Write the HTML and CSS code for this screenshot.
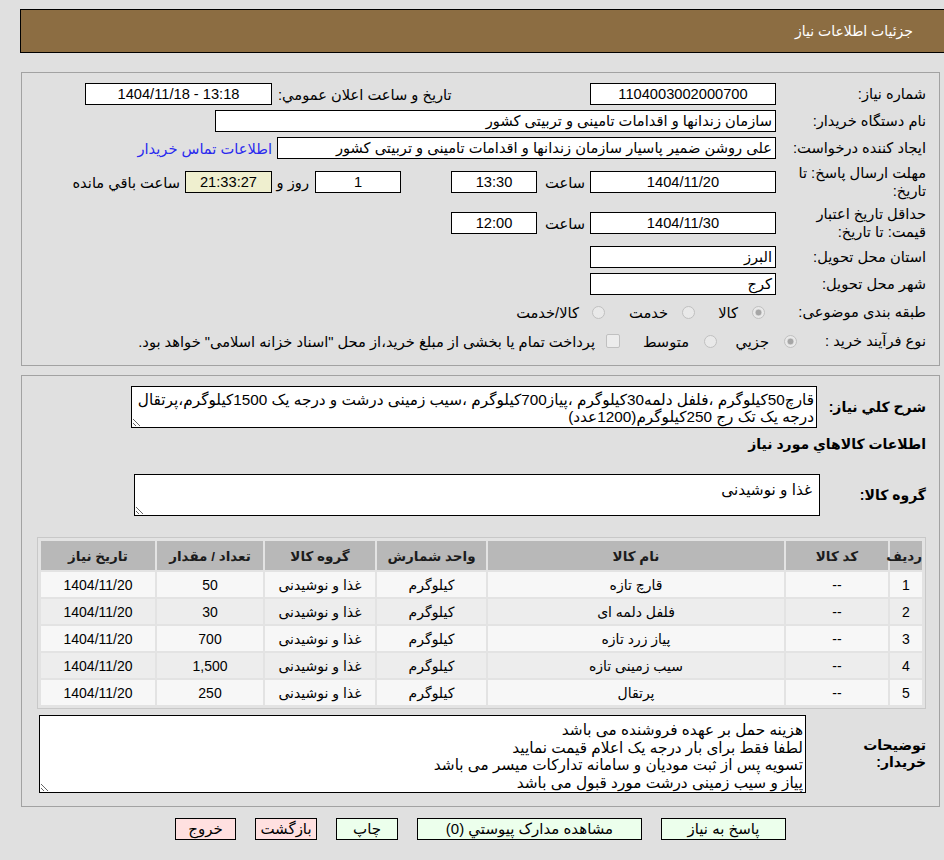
FILE: index.html
```html
<!DOCTYPE html>
<html lang="fa" dir="rtl">
<head>
<meta charset="utf-8">
<title>جزئیات اطلاعات نیاز</title>
<link rel="stylesheet" href="styles.css">
</head>
<body>
<div class="page">
  <header class="title-bar"><h1 class="title">جزئیات اطلاعات نیاز</h1></header>

  <section class="panel info">
    <div class="row">
      <div class="lbl">شماره نیاز:</div>
      <div class="field w186 c">1104003002000700</div>
      <div class="lbl-mid">تاریخ و ساعت اعلان عمومي:</div>
      <div class="field w187 c" dir="ltr">1404/11/18 - 13:18</div>
    </div>
    <div class="row">
      <div class="lbl">نام دستگاه خریدار:</div>
      <div class="field w561">سازمان زندانها و اقدامات تامینی و تربیتی کشور</div>
    </div>
    <div class="row">
      <div class="lbl">ایجاد کننده درخواست:</div>
      <div class="field w499">علی روشن ضمیر پاسیار سازمان زندانها و اقدامات تامینی و تربیتی کشور</div>
      <a class="link" href="#">اطلاعات تماس خریدار</a>
    </div>
    <div class="row">
      <div class="lbl two">مهلت ارسال پاسخ: تا<br>تاریخ:</div>
      <div class="field w186 c">1404/11/20</div>
      <div class="unit">ساعت</div>
      <div class="field w86 c">13:30</div>
      <div class="field w86 c gap50">1</div>
      <div class="unit-day">روز و</div>
      <div class="field w87 c remain">21:33:27</div>
      <div class="after">ساعت باقي مانده</div>
    </div>
    <div class="row">
      <div class="lbl two">حداقل تاریخ اعتبار<br>قیمت: تا تاریخ:</div>
      <div class="field w186 c">1404/11/30</div>
      <div class="unit">ساعت</div>
      <div class="field w86 c">12:00</div>
    </div>
    <div class="row">
      <div class="lbl">استان محل تحویل:</div>
      <div class="field w186">البرز</div>
    </div>
    <div class="row">
      <div class="lbl">شهر محل تحویل:</div>
      <div class="field w186">کرج</div>
    </div>
    <div class="row opts">
      <div class="lbl">طبقه بندی موضوعی:</div>
      <label class="opt o81 first"><input type="radio" name="cat" checked disabled><span>کالا</span></label>
      <label class="opt o90"><input type="radio" name="cat" disabled><span>خدمت</span></label>
      <label class="opt o-last"><input type="radio" name="cat" disabled><span>کالا/خدمت</span></label>
    </div>
    <div class="row opts">
      <div class="lbl l129">نوع فرآیند خرید :</div>
      <label class="opt o80 wide"><input type="radio" name="proc" checked disabled><span>جزيي</span></label>
      <label class="opt o97 wide"><input type="radio" name="proc" disabled><span>متوسط</span></label>
      <label class="opt chk"><input type="checkbox" disabled><span>پرداخت تمام یا بخشی از مبلغ خرید،از محل "اسناد خزانه اسلامی" خواهد بود.</span></label>
    </div>
  </section>

  <section class="panel needs">
    <div class="prow">
      <div class="plbl w109">شرح کلي نیاز:</div>
      <textarea class="ta ta-desc" wrap="off" readonly>قارچ50کیلوگرم ،فلفل دلمه30کیلوگرم ،پیاز700کیلوگرم ،سیب زمینی درشت و درجه یک 1500کیلوگرم،پرتقال
درجه یک تک رج 250کیلوگرم(1200عدد)</textarea>
    </div>
    <h2 class="subhead">اطلاعات کالاهاي مورد نیاز</h2>
    <div class="prow group">
      <div class="plbl w106">گروه کالا:</div>
      <textarea class="ta ta-group" wrap="off" readonly>غذا و نوشیدنی</textarea>
    </div>
    <div class="grid-wrap">
      <table class="items">
        <colgroup>
          <col style="width:32px"><col style="width:102px"><col style="width:296px"><col style="width:109px"><col style="width:110px"><col style="width:106px"><col style="width:114px">
        </colgroup>
        <thead>
          <tr><th>ردیف</th><th>کد کالا</th><th>نام کالا</th><th>واحد شمارش</th><th>گروه کالا</th><th>تعداد / مقدار</th><th>تاریخ نیاز</th></tr>
        </thead>
        <tbody>
          <tr><td>1</td><td>--</td><td>قارچ تازه</td><td>کیلوگرم</td><td>غذا و نوشیدنی</td><td>50</td><td>1404/11/20</td></tr>
          <tr><td>2</td><td>--</td><td>فلفل دلمه ای</td><td>کیلوگرم</td><td>غذا و نوشیدنی</td><td>30</td><td>1404/11/20</td></tr>
          <tr><td>3</td><td>--</td><td>پیاز زرد تازه</td><td>کیلوگرم</td><td>غذا و نوشیدنی</td><td>700</td><td>1404/11/20</td></tr>
          <tr><td>4</td><td>--</td><td>سیب زمینی تازه</td><td>کیلوگرم</td><td>غذا و نوشیدنی</td><td>1,500</td><td>1404/11/20</td></tr>
          <tr><td>5</td><td>--</td><td>پرتقال</td><td>کیلوگرم</td><td>غذا و نوشیدنی</td><td>250</td><td>1404/11/20</td></tr>
        </tbody>
      </table>
    </div>
    <div class="prow notes">
      <div class="plbl w120">توضیحات<br>خریدار:</div>
      <textarea class="ta ta-notes" wrap="off" readonly>هزینه حمل بر عهده فروشنده می باشد
لطفا فقط برای بار درجه یک اعلام قیمت نمایید
تسویه پس از ثبت مودیان و سامانه تدارکات میسر می باشد
پیاز و سیب زمینی درشت مورد قبول می باشد</textarea>
    </div>
  </section>

  <div class="actions">
    <button type="button" class="btn ok b125">پاسخ به نیاز</button>
    <button type="button" class="btn ok b225">مشاهده مدارک پیوستي (0)</button>
    <button type="button" class="btn ok b62">چاپ</button>
    <button type="button" class="btn no b62">بازگشت</button>
    <button type="button" class="btn no b61">خروج</button>
  </div>
</div>
</body>
</html>
```

FILE: styles.css
```css
* { box-sizing: border-box; }
html, body { margin: 0; }
body {
  background: #e0e0e0;
  font-family: "Liberation Sans", "DejaVu Sans", sans-serif;
  font-size: 14.67px;
  color: #000;
  overflow: hidden;
}
.page { padding: 9px 4px 0 21px; }

.title-bar {
  margin: 0 -4px 0 -1px;
  height: 44px;
  background: #8c6d42;
  border: 1px solid #000;
  border-right: 0;
  display: flex;
  align-items: center;
  padding-right: 31px;
}
.title { margin: 0; font-size: 14px; font-weight: normal; color: #fff; }

.panel { border: 1px solid #a2a2a2; }

/* ---------- info panel ---------- */
.info {
  margin-top: 19px;
  padding: 10px 13px 12px 10px;
  display: flex;
  flex-direction: column;
  gap: 5px;
}
.row { display: flex; align-items: center; min-height: 22px; }
.lbl { width: 150px; flex: none; white-space: nowrap; line-height: 18px; }
.lbl.l129 { width: 129px; }
.field {
  flex: none;
  height: 22px;
  line-height: 20px;
  border: 1px solid #000;
  background: #fff;
  padding: 0 3px;
  white-space: nowrap;
  overflow: hidden;
}
.c { text-align: center; }
.w186 { width: 186px; }
.w187 { width: 187px; margin-right: 6px; }
.w561 { width: 561px; }
.w499 { width: 499px; }
.w86 { width: 86px; }
.w87 { width: 87px; }
.gap50 { margin-right: 50px; }
.remain { background: #efefcf; }
.lbl-mid { flex: none; width: 312px; text-align: left; white-space: nowrap; }
.link { margin-right: 5px; color: #2a2aee; text-decoration: none; white-space: nowrap; }
.unit { flex: none; width: 53px; padding-right: 5px; white-space: nowrap; }
.unit-day { flex: none; width: 43px; padding-right: 6px; white-space: nowrap; }
.after { margin-right: 5px; white-space: nowrap; }

.opts { min-height: 24px; }
.opt { display: flex; align-items: center; flex: none; white-space: nowrap; }
.o81 { width: 81px; }
.o90 { width: 90px; }
.o80 { width: 80px; }
.o97 { width: 97px; }
.opt input {
  appearance: none;
  -webkit-appearance: none;
  margin: 0 0 0 14px;
  width: 13px;
  height: 13px;
  flex: none;
  border: 1px solid #c0c0c0;
  background: #e9e9e9;
}
.opt.first input { margin-right: 11px; }
.opt.o-last input { margin-left: 13px; }
.opt.wide input { margin-left: 15px; }
.opt input[type="radio"] { border-radius: 50%; }
.opt input[type="radio"]:checked {
  background: radial-gradient(circle, #a6a6a6 0 2.6px, #d6d6d6 3.2px, #e9e9e9 4px);
}
.opt.chk input { width: 14px; height: 14px; border-radius: 2px; margin-left: 11px; background: #ececec; }

/* ---------- needs panel ---------- */
.needs {
  margin-top: 9px;
  padding: 10px 13px 13px 10px;
}
.prow { display: flex; align-items: center; }
.plbl { flex: none; font-weight: bold; font-size: 14px; line-height: 17px; white-space: nowrap; }
.w109 { width: 109px; }
.w106 { width: 106px; }
.w120 { width: 120px; }
.ta {
  display: block;
  flex: none;
  margin: 0;
  border: 1px solid #000;
  background: #fff;
  font-family: "Liberation Sans", "DejaVu Sans", sans-serif;
  font-size: 15.3px;
  line-height: 17px;
  color: #000;
  padding: 4px 2px 0;
  overflow: hidden;
  white-space: pre;
  border-radius: 0;
  outline: none;
}
.ta-desc { width: 686px; height: 42px; }
.ta-group { width: 686px; height: 42px; padding-top: 6px; padding-right: 7px; }
.ta-notes { width: 767px; height: 78px; padding-top: 5px; line-height: 17.5px; }

.subhead {
  margin: 7px 0 0;
  font-size: 14px;
  font-weight: bold;
  line-height: 18px;
}
.group { margin-top: 21px; }

.grid-wrap {
  margin-top: 21px;
  width: 889px;
  border: 1px solid #c8c8c8;
  padding: 1px;
  background: #e3e3e3;
}
.items {
  width: 100%;
  table-layout: fixed;
  border-spacing: 2px;
  font-size: 14px;
}
.items th {
  height: 29px;
  background: #b8b8b8;
  color: #1c1c1c;
  font-size: 13.5px;
  font-weight: bold;
  padding: 0;
}
.items td {
  height: 25px;
  padding: 0;
  text-align: center;
  background: #f7f7f7;
  white-space: nowrap;
}
.items tbody tr:nth-child(even) td { background: #ededed; }

.notes { margin-top: 6px; }

/* ---------- actions ---------- */
.actions {
  width: 919px;
  margin-top: 11px;
  display: flex;
  justify-content: center;
  gap: 19px;
}
.btn {
  height: 22px;
  border: 1px solid #000;
  border-radius: 0;
  padding: 0;
  font-family: "Liberation Sans", "DejaVu Sans", sans-serif;
  font-size: 15px;
  color: #000;
  line-height: 20px;
}
.ok { background: #ecffec; }
.no { background: #ffe0e0; }
.b125 { width: 125px; }
.b225 { width: 225px; }
.b62 { width: 62px; }
.b61 { width: 61px; }
```
